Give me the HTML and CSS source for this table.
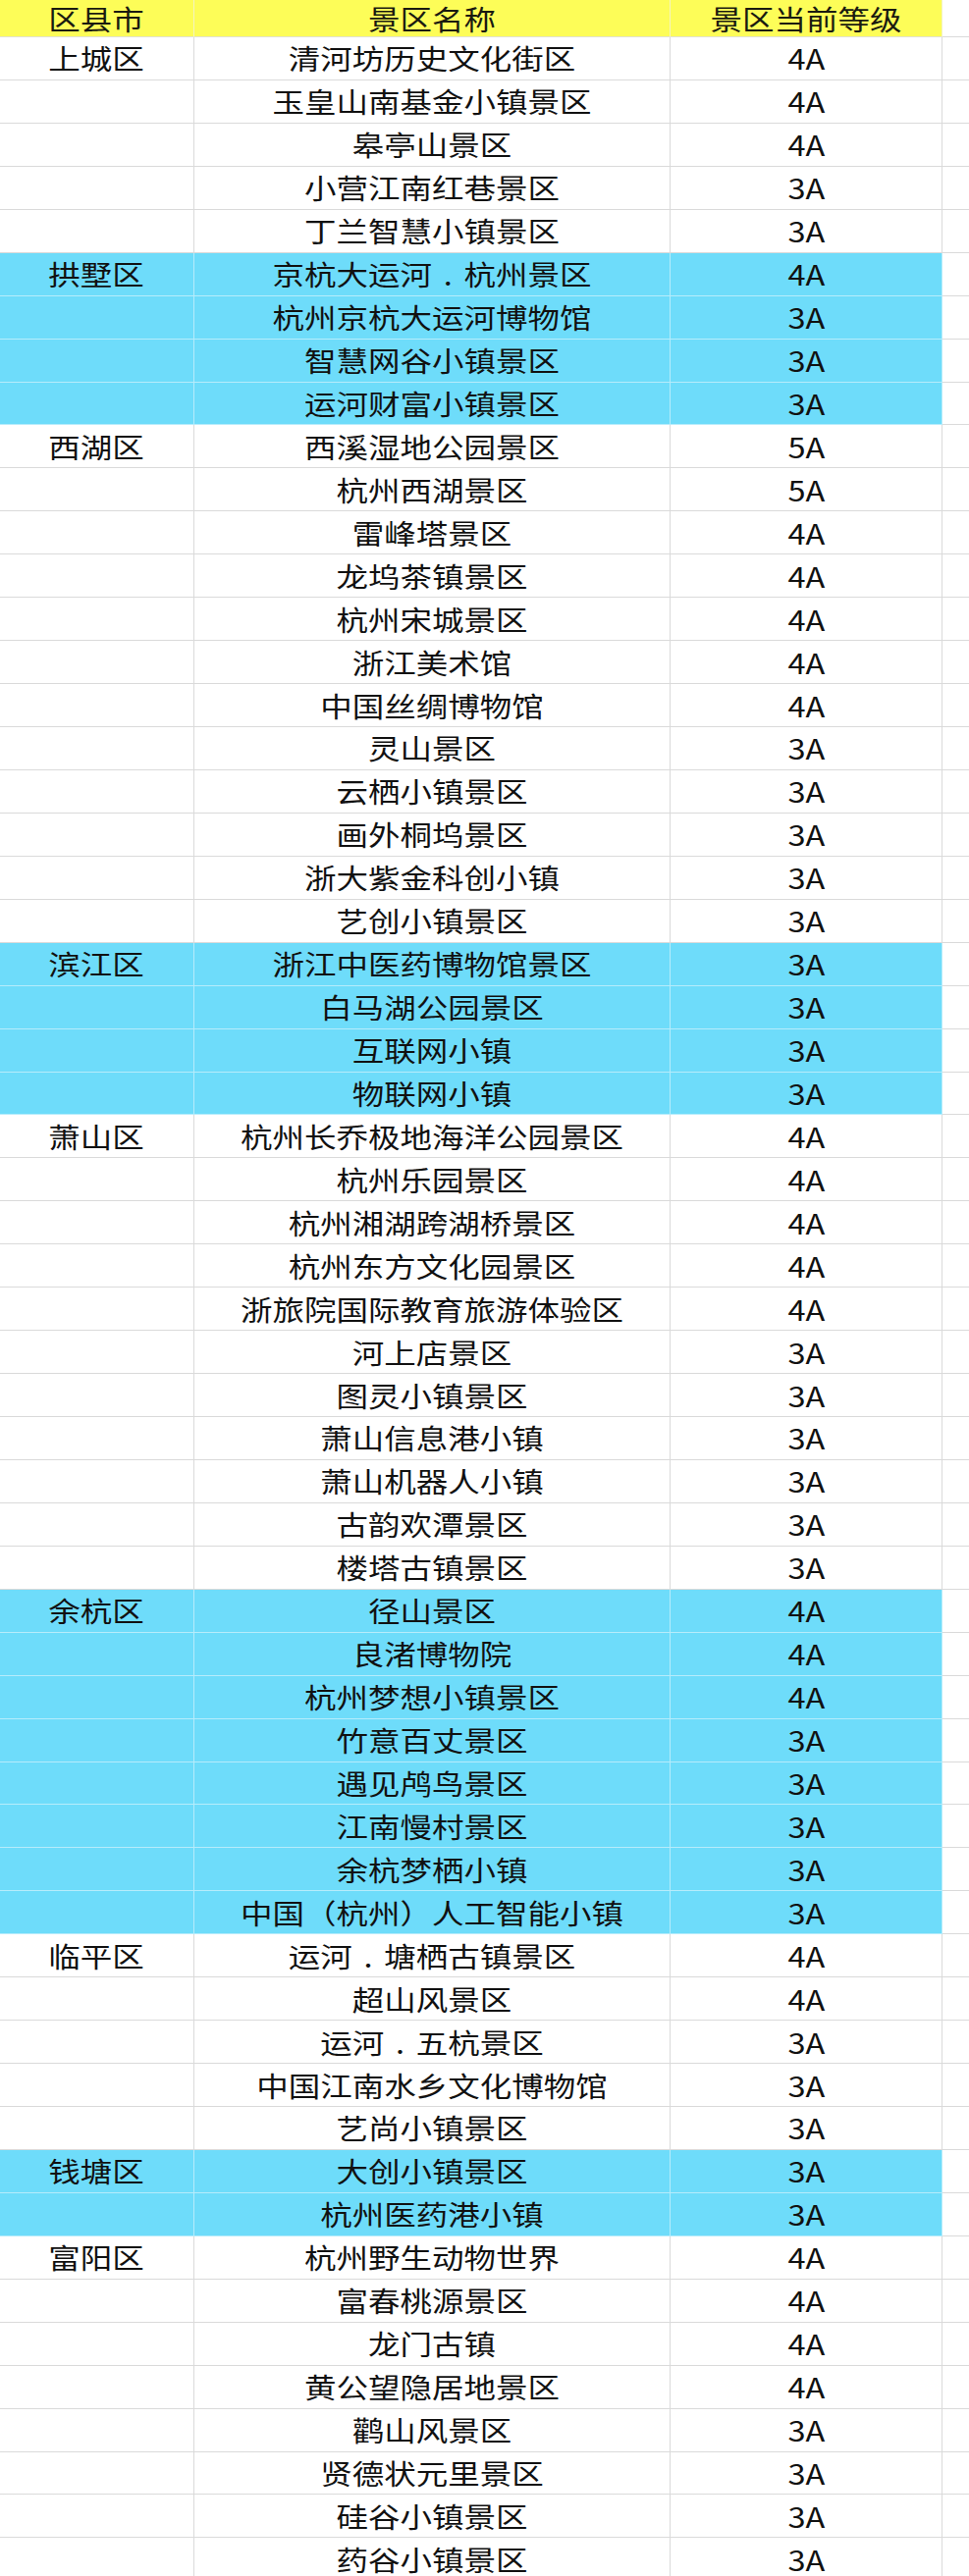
FILE: index.html
```html
<!DOCTYPE html>
<html lang="zh-CN">
<head>
<meta charset="utf-8">
<title>杭州景区等级</title>
<link rel="stylesheet" href="styles.css">
</head>
<body>
<div class="sheet">
  <div class="row head"><div class="c"><span class="t">区县市</span></div><div class="c"><span class="t">景区名称</span></div><div class="c"><span class="t">景区当前等级</span></div><div class="x"></div></div>

  <div class="row"><div class="c"><span class="t">上城区</span></div><div class="c"><span class="t">清河坊历史文化街区</span></div><div class="c"><span class="t">4A</span></div><div class="x"></div></div>
  <div class="row"><div class="c"></div><div class="c"><span class="t">玉皇山南基金小镇景区</span></div><div class="c"><span class="t">4A</span></div><div class="x"></div></div>
  <div class="row"><div class="c"></div><div class="c"><span class="t">皋亭山景区</span></div><div class="c"><span class="t">4A</span></div><div class="x"></div></div>
  <div class="row"><div class="c"></div><div class="c"><span class="t">小营江南红巷景区</span></div><div class="c"><span class="t">3A</span></div><div class="x"></div></div>
  <div class="row"><div class="c"></div><div class="c"><span class="t">丁兰智慧小镇景区</span></div><div class="c"><span class="t">3A</span></div><div class="x"></div></div>

  <div class="row blue"><div class="c"><span class="t">拱墅区</span></div><div class="c"><span class="t">京杭大运河<span class="dot">.</span>杭州景区</span></div><div class="c"><span class="t">4A</span></div><div class="x"></div></div>
  <div class="row blue"><div class="c"></div><div class="c"><span class="t">杭州京杭大运河博物馆</span></div><div class="c"><span class="t">3A</span></div><div class="x"></div></div>
  <div class="row blue"><div class="c"></div><div class="c"><span class="t">智慧网谷小镇景区</span></div><div class="c"><span class="t">3A</span></div><div class="x"></div></div>
  <div class="row blue"><div class="c"></div><div class="c"><span class="t">运河财富小镇景区</span></div><div class="c"><span class="t">3A</span></div><div class="x"></div></div>

  <div class="row"><div class="c"><span class="t">西湖区</span></div><div class="c"><span class="t">西溪湿地公园景区</span></div><div class="c"><span class="t">5A</span></div><div class="x"></div></div>
  <div class="row"><div class="c"></div><div class="c"><span class="t">杭州西湖景区</span></div><div class="c"><span class="t">5A</span></div><div class="x"></div></div>
  <div class="row"><div class="c"></div><div class="c"><span class="t">雷峰塔景区</span></div><div class="c"><span class="t">4A</span></div><div class="x"></div></div>
  <div class="row"><div class="c"></div><div class="c"><span class="t">龙坞茶镇景区</span></div><div class="c"><span class="t">4A</span></div><div class="x"></div></div>
  <div class="row"><div class="c"></div><div class="c"><span class="t">杭州宋城景区</span></div><div class="c"><span class="t">4A</span></div><div class="x"></div></div>
  <div class="row"><div class="c"></div><div class="c"><span class="t">浙江美术馆</span></div><div class="c"><span class="t">4A</span></div><div class="x"></div></div>
  <div class="row"><div class="c"></div><div class="c"><span class="t">中国丝绸博物馆</span></div><div class="c"><span class="t">4A</span></div><div class="x"></div></div>
  <div class="row"><div class="c"></div><div class="c"><span class="t">灵山景区</span></div><div class="c"><span class="t">3A</span></div><div class="x"></div></div>
  <div class="row"><div class="c"></div><div class="c"><span class="t">云栖小镇景区</span></div><div class="c"><span class="t">3A</span></div><div class="x"></div></div>
  <div class="row"><div class="c"></div><div class="c"><span class="t">画外桐坞景区</span></div><div class="c"><span class="t">3A</span></div><div class="x"></div></div>
  <div class="row"><div class="c"></div><div class="c"><span class="t">浙大紫金科创小镇</span></div><div class="c"><span class="t">3A</span></div><div class="x"></div></div>
  <div class="row"><div class="c"></div><div class="c"><span class="t">艺创小镇景区</span></div><div class="c"><span class="t">3A</span></div><div class="x"></div></div>

  <div class="row blue"><div class="c"><span class="t">滨江区</span></div><div class="c"><span class="t">浙江中医药博物馆景区</span></div><div class="c"><span class="t">3A</span></div><div class="x"></div></div>
  <div class="row blue"><div class="c"></div><div class="c"><span class="t">白马湖公园景区</span></div><div class="c"><span class="t">3A</span></div><div class="x"></div></div>
  <div class="row blue"><div class="c"></div><div class="c"><span class="t">互联网小镇</span></div><div class="c"><span class="t">3A</span></div><div class="x"></div></div>
  <div class="row blue"><div class="c"></div><div class="c"><span class="t">物联网小镇</span></div><div class="c"><span class="t">3A</span></div><div class="x"></div></div>

  <div class="row"><div class="c"><span class="t">萧山区</span></div><div class="c"><span class="t">杭州长乔极地海洋公园景区</span></div><div class="c"><span class="t">4A</span></div><div class="x"></div></div>
  <div class="row"><div class="c"></div><div class="c"><span class="t">杭州乐园景区</span></div><div class="c"><span class="t">4A</span></div><div class="x"></div></div>
  <div class="row"><div class="c"></div><div class="c"><span class="t">杭州湘湖跨湖桥景区</span></div><div class="c"><span class="t">4A</span></div><div class="x"></div></div>
  <div class="row"><div class="c"></div><div class="c"><span class="t">杭州东方文化园景区</span></div><div class="c"><span class="t">4A</span></div><div class="x"></div></div>
  <div class="row"><div class="c"></div><div class="c"><span class="t">浙旅院国际教育旅游体验区</span></div><div class="c"><span class="t">4A</span></div><div class="x"></div></div>
  <div class="row"><div class="c"></div><div class="c"><span class="t">河上店景区</span></div><div class="c"><span class="t">3A</span></div><div class="x"></div></div>
  <div class="row"><div class="c"></div><div class="c"><span class="t">图灵小镇景区</span></div><div class="c"><span class="t">3A</span></div><div class="x"></div></div>
  <div class="row"><div class="c"></div><div class="c"><span class="t">萧山信息港小镇</span></div><div class="c"><span class="t">3A</span></div><div class="x"></div></div>
  <div class="row"><div class="c"></div><div class="c"><span class="t">萧山机器人小镇</span></div><div class="c"><span class="t">3A</span></div><div class="x"></div></div>
  <div class="row"><div class="c"></div><div class="c"><span class="t">古韵欢潭景区</span></div><div class="c"><span class="t">3A</span></div><div class="x"></div></div>
  <div class="row"><div class="c"></div><div class="c"><span class="t">楼塔古镇景区</span></div><div class="c"><span class="t">3A</span></div><div class="x"></div></div>

  <div class="row blue"><div class="c"><span class="t">余杭区</span></div><div class="c"><span class="t">径山景区</span></div><div class="c"><span class="t">4A</span></div><div class="x"></div></div>
  <div class="row blue"><div class="c"></div><div class="c"><span class="t">良渚博物院</span></div><div class="c"><span class="t">4A</span></div><div class="x"></div></div>
  <div class="row blue"><div class="c"></div><div class="c"><span class="t">杭州梦想小镇景区</span></div><div class="c"><span class="t">4A</span></div><div class="x"></div></div>
  <div class="row blue"><div class="c"></div><div class="c"><span class="t">竹意百丈景区</span></div><div class="c"><span class="t">3A</span></div><div class="x"></div></div>
  <div class="row blue"><div class="c"></div><div class="c"><span class="t">遇见鸬鸟景区</span></div><div class="c"><span class="t">3A</span></div><div class="x"></div></div>
  <div class="row blue"><div class="c"></div><div class="c"><span class="t">江南慢村景区</span></div><div class="c"><span class="t">3A</span></div><div class="x"></div></div>
  <div class="row blue"><div class="c"></div><div class="c"><span class="t">余杭梦栖小镇</span></div><div class="c"><span class="t">3A</span></div><div class="x"></div></div>
  <div class="row blue"><div class="c"></div><div class="c"><span class="t">中国（杭州）人工智能小镇</span></div><div class="c"><span class="t">3A</span></div><div class="x"></div></div>

  <div class="row"><div class="c"><span class="t">临平区</span></div><div class="c"><span class="t">运河<span class="dot">.</span>塘栖古镇景区</span></div><div class="c"><span class="t">4A</span></div><div class="x"></div></div>
  <div class="row"><div class="c"></div><div class="c"><span class="t">超山风景区</span></div><div class="c"><span class="t">4A</span></div><div class="x"></div></div>
  <div class="row"><div class="c"></div><div class="c"><span class="t">运河<span class="dot">.</span>五杭景区</span></div><div class="c"><span class="t">3A</span></div><div class="x"></div></div>
  <div class="row"><div class="c"></div><div class="c"><span class="t">中国江南水乡文化博物馆</span></div><div class="c"><span class="t">3A</span></div><div class="x"></div></div>
  <div class="row"><div class="c"></div><div class="c"><span class="t">艺尚小镇景区</span></div><div class="c"><span class="t">3A</span></div><div class="x"></div></div>

  <div class="row blue"><div class="c"><span class="t">钱塘区</span></div><div class="c"><span class="t">大创小镇景区</span></div><div class="c"><span class="t">3A</span></div><div class="x"></div></div>
  <div class="row blue"><div class="c"></div><div class="c"><span class="t">杭州医药港小镇</span></div><div class="c"><span class="t">3A</span></div><div class="x"></div></div>

  <div class="row"><div class="c"><span class="t">富阳区</span></div><div class="c"><span class="t">杭州野生动物世界</span></div><div class="c"><span class="t">4A</span></div><div class="x"></div></div>
  <div class="row"><div class="c"></div><div class="c"><span class="t">富春桃源景区</span></div><div class="c"><span class="t">4A</span></div><div class="x"></div></div>
  <div class="row"><div class="c"></div><div class="c"><span class="t">龙门古镇</span></div><div class="c"><span class="t">4A</span></div><div class="x"></div></div>
  <div class="row"><div class="c"></div><div class="c"><span class="t">黄公望隐居地景区</span></div><div class="c"><span class="t">4A</span></div><div class="x"></div></div>
  <div class="row"><div class="c"></div><div class="c"><span class="t">鹳山风景区</span></div><div class="c"><span class="t">3A</span></div><div class="x"></div></div>
  <div class="row"><div class="c"></div><div class="c"><span class="t">贤德状元里景区</span></div><div class="c"><span class="t">3A</span></div><div class="x"></div></div>
  <div class="row"><div class="c"></div><div class="c"><span class="t">硅谷小镇景区</span></div><div class="c"><span class="t">3A</span></div><div class="x"></div></div>
  <div class="row"><div class="c"></div><div class="c"><span class="t">药谷小镇景区</span></div><div class="c"><span class="t">3A</span></div><div class="x"></div></div>
</div>
</body>
</html>
```

FILE: styles.css
```css
html, body {
  margin: 0;
  padding: 0;
  background: #ffffff;
}

.sheet {
  width: 987px;
  font-family: "Noto Sans CJK SC", "Noto Sans", sans-serif;
  font-size: 28px;
  color: #111111;
}

.row {
  display: grid;
  grid-template-columns: 198px 485px 277px 1fr;
  height: 43.95px;
  box-sizing: border-box;
}

.row.head {
  height: 38px;
}

.c, .x {
  display: flex;
  align-items: center;
  justify-content: center;
  border-right: 1px solid #dadada;
  border-bottom: 1px solid #dadada;
  box-sizing: border-box;
  overflow: hidden;
  white-space: nowrap;
}

.x {
  border-right: none;
}

.t {
  display: inline-block;
  line-height: 1;
  transform: scaleX(1.16);
}

.dot {
  display: inline-block;
  width: 1em;
  text-align: center;
}

.head .c {
  background: #fdfd58;
  border-right-color: #f4f4c0;
  border-bottom-color: #e2e2cf;
  color: #1a1a10;
}

.blue .c {
  background: #6edcfa;
  border-right-color: #b6ecfb;
  border-bottom-color: #b6ecfb;
}
```
